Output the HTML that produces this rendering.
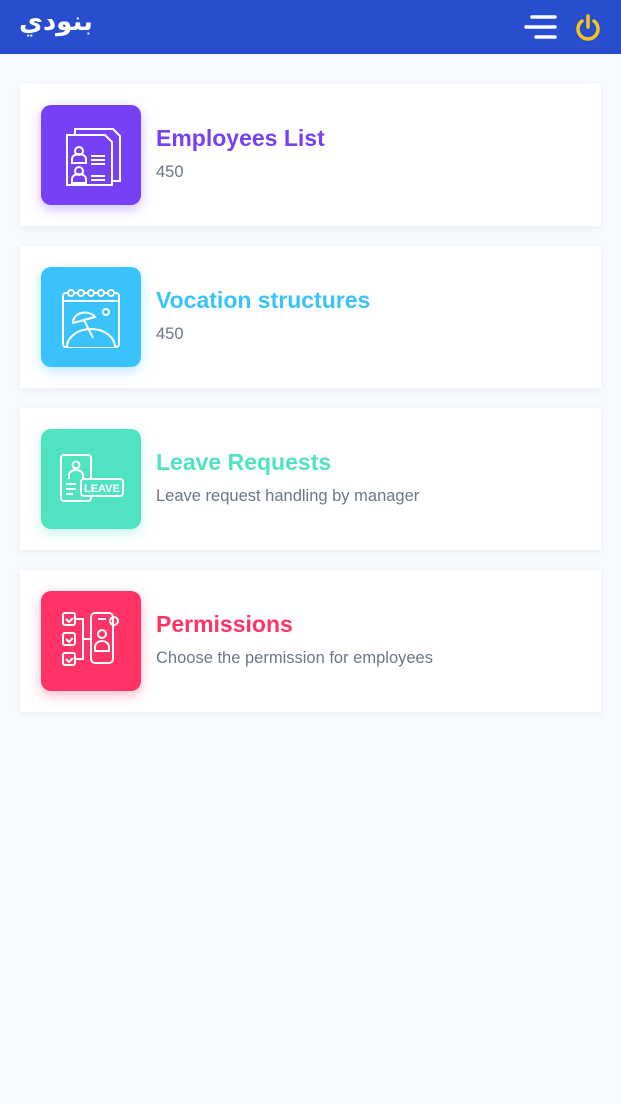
<!DOCTYPE html>
<html><head><meta charset="utf-8"><style>
*{margin:0;padding:0;box-sizing:border-box}
body{width:621px;height:1104px;background:#f6f9fd;font-family:"Liberation Sans",sans-serif;overflow:hidden}
.top{height:54px;background:#284ecf;position:relative}
.logo{position:absolute;left:19px;top:7px;color:#fff;font:bold 26px "DejaVu Sans",sans-serif;letter-spacing:-1px}
.card{position:absolute;left:20px;width:581px;height:142px;background:#fff;box-shadow:0 2px 6px rgba(40,60,100,.06)}
.ic{position:absolute;left:21px;top:21px;width:100px;height:100px;border-radius:10px}
.t{position:absolute;left:136px;top:41px;font-size:23px;font-weight:bold}
.s{position:absolute;left:136px;top:79px;font-size:16.5px;color:#6b7785}
svg{position:absolute;left:0;top:0}
</style></head><body>
<div class="top"><div class="logo">بنودي</div>
<svg style="left:520px;top:12px" width="40" height="30"><g stroke="#fff" stroke-width="3.5" stroke-linecap="round"><line x1="12" y1="5" x2="35" y2="5"/><line x1="6" y1="15" x2="35" y2="15"/><line x1="16" y1="25" x2="35" y2="25"/></g></svg>
<svg style="left:572px;top:12px" width="32" height="32"><g stroke="#f5c518" stroke-width="3.5" fill="none" stroke-linecap="round"><path d="M10 9 A10 10 0 1 0 22 9"/><line x1="16" y1="4" x2="16" y2="15"/></g></svg>
</div>

<div class="card" style="top:84px"><div class="ic" style="background:#7641f5;box-shadow:0 4px 12px rgba(118,65,245,.35)">
<svg width="100" height="100"><g stroke="#fff" stroke-width="2" fill="none"><path d="M34 24h38l7 7v45H34z"/><path d="M26 30h38l7 7v43H26z" fill="#7641f5"/><circle cx="38" cy="46" r="4"/><path d="M31 58v-4a7 5 0 0 1 14 0v4z"/><circle cx="38" cy="66" r="4"/><path d="M31 78v-4a7 5 0 0 1 14 0v4z"/><path d="M50 51h14M50 55h14M50 59h14M50 71h14M50 75h14"/></g></svg></div>
<div class="t" style="color:#7641f5">Employees List</div><div class="s">450</div></div>

<div class="card" style="top:246px"><div class="ic" style="background:#39c2fc;box-shadow:0 4px 12px rgba(57,194,252,.35)">
<svg width="100" height="100"><g stroke="#fff" stroke-width="2" fill="none"><rect x="22" y="26" width="56" height="54" rx="3"/><line x1="22" y1="34" x2="78" y2="34"/><circle cx="30" cy="26" r="3" fill="#39c2fc"/><circle cx="40" cy="26" r="3" fill="#39c2fc"/><circle cx="50" cy="26" r="3" fill="#39c2fc"/><circle cx="60" cy="26" r="3" fill="#39c2fc"/><circle cx="70" cy="26" r="3" fill="#39c2fc"/><path d="M26 80a24 18 0 0 1 48 0" fill="#39c2fc"/><path d="M32 56a12 10 0 0 1 22-6z"/><line x1="43" y1="53" x2="52" y2="71"/><circle cx="65" cy="45" r="3"/></g></svg></div>
<div class="t" style="color:#39c2fc">Vocation structures</div><div class="s">450</div></div>

<div class="card" style="top:408px"><div class="ic" style="background:#50e3c2;box-shadow:0 4px 12px rgba(80,227,194,.35)">
<svg width="100" height="100"><g stroke="#fff" stroke-width="2" fill="none"><rect x="20" y="26" width="30" height="46" rx="3"/><circle cx="35" cy="36" r="3.5"/><path d="M28 50v-4a7 5 0 0 1 14 0v4"/><path d="M25 55h10M25 60h10M25 65h7"/><rect x="40" y="50" width="42" height="17" rx="3" fill="#50e3c2"/><text x="43" y="63" fill="#fff" stroke="none" font-family="Liberation Sans" font-weight="bold" font-size="11">LEAVE</text></g></svg></div>
<div class="t" style="color:#50e3c2">Leave Requests</div><div class="s">Leave request handling by manager</div></div>

<div class="card" style="top:570px"><div class="ic" style="background:#ff3366;box-shadow:0 4px 12px rgba(255,51,102,.35)">
<svg width="100" height="100"><g stroke="#fff" stroke-width="2" fill="none"><rect x="22" y="22" width="12" height="12" rx="2"/><rect x="22" y="42" width="12" height="12" rx="2"/><rect x="22" y="62" width="12" height="12" rx="2"/><path d="M25 28l3 3 4-4M25 48l3 3 4-4M25 68l3 3 4-4M34 28h8v40h-8M42 48h8"/><rect x="50" y="22" width="22" height="50" rx="4"/><line x1="57" y1="28" x2="65" y2="28"/><circle cx="61" cy="43" r="4"/><path d="M54 56a7 6 0 0 1 14 0v4h-14z"/><circle cx="73" cy="30" r="4"/></g></svg></div>
<div class="t" style="color:#ff3366">Permissions</div><div class="s">Choose the permission for employees</div></div>
</body></html>
